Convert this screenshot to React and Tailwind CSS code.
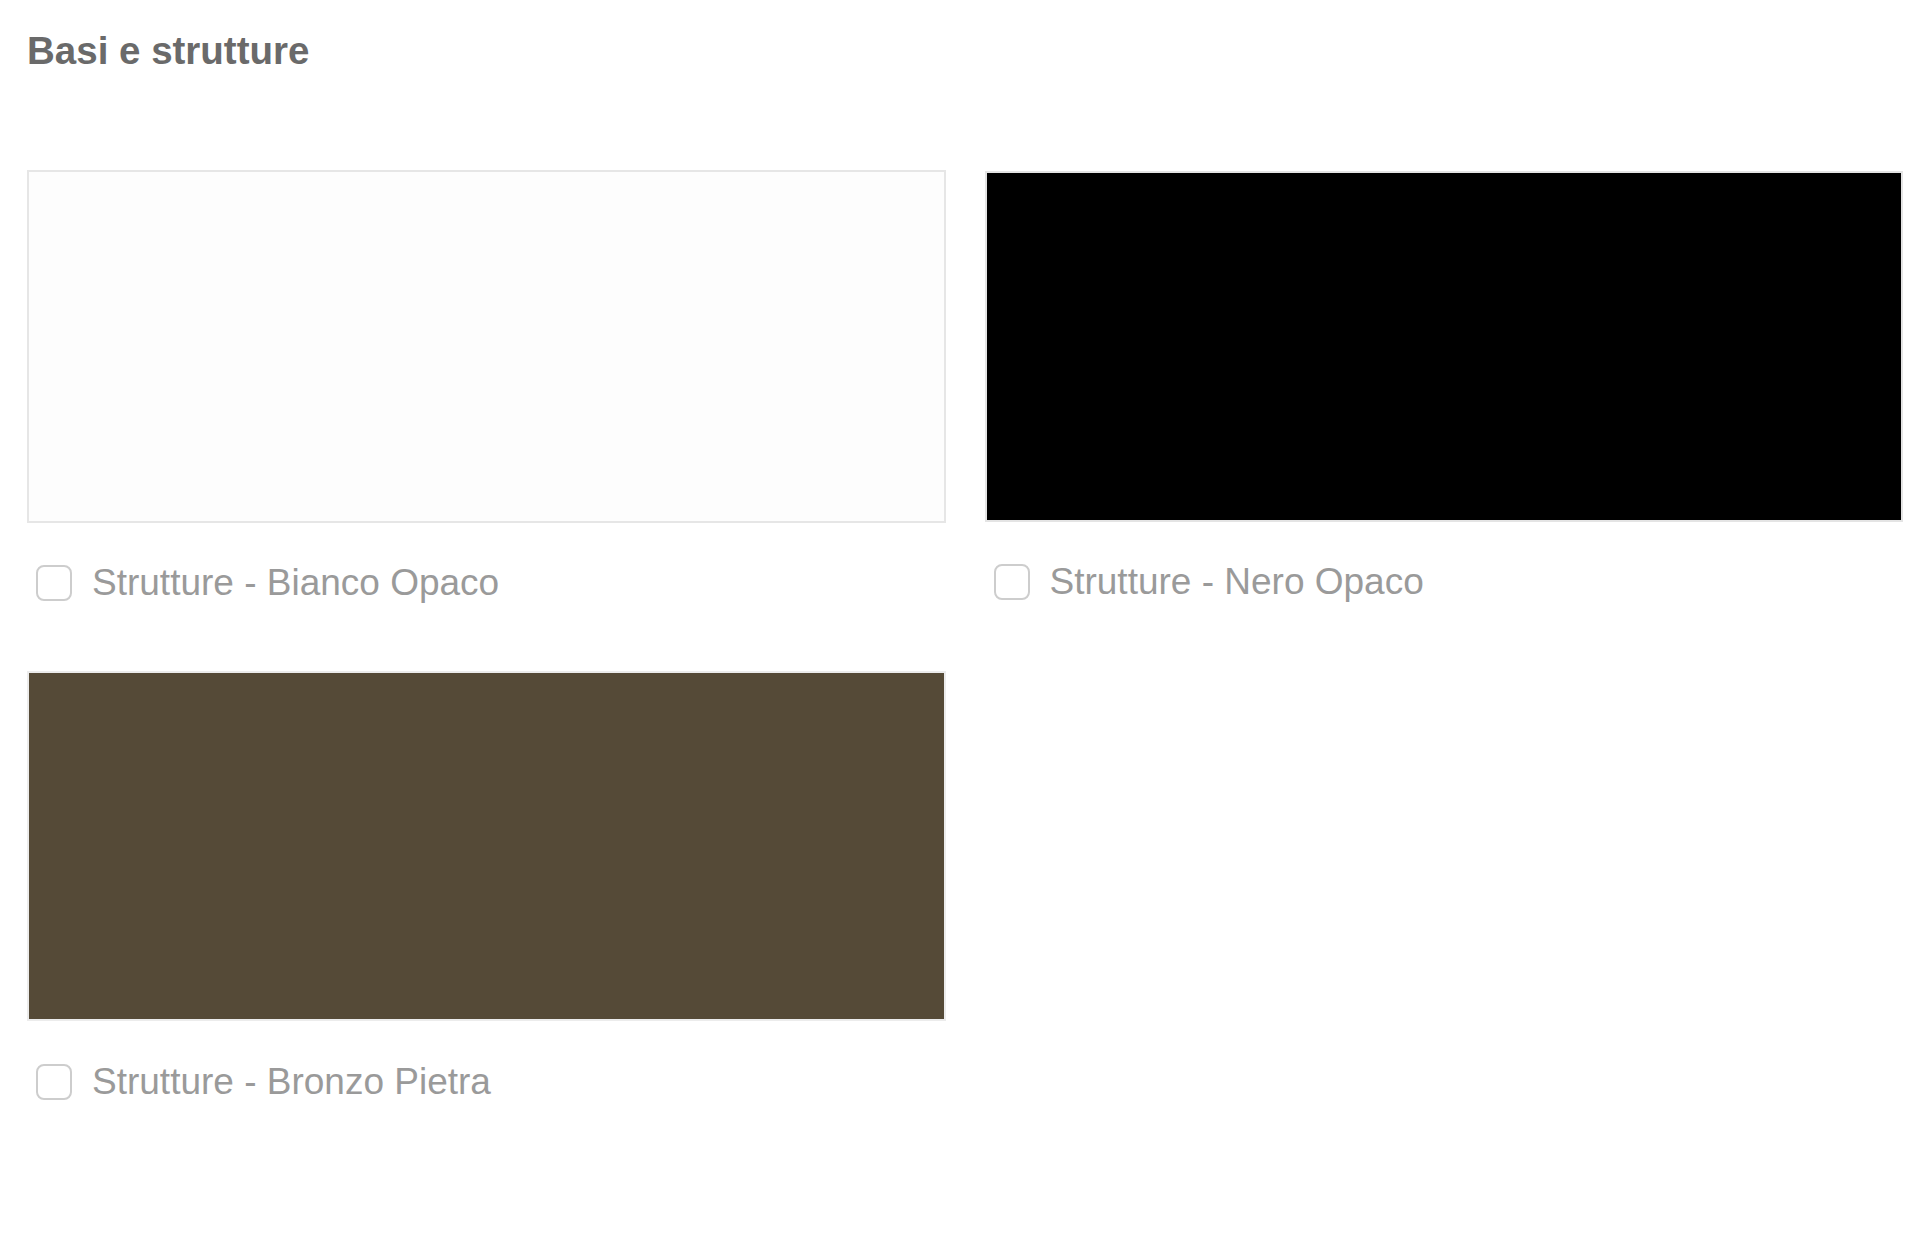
import React from "react";

const items = [
  { label: "Strutture - Bianco Opaco", swatch: "h-[353px] bg-[#fdfdfd] border-2 border-[#e6e6e6]", gap: "mt-[40px]" },
  { label: "Strutture - Nero Opaco", swatch: "h-[351px] mt-[1px] bg-black border-2 border-[#e4e4e4]", gap: "mt-[40px]" },
  { label: "Strutture - Bronzo Pietra", swatch: "h-[350px] bg-[#554a37] border-2 border-[#ececec]", gap: "mt-[41px]" },
];

function Item({ label, swatch, gap }) {
  return (
    <div className="flex flex-col">
      <div className={`w-full ${swatch}`} />
      <label className={`${gap} flex h-[40px] items-center`}>
        <span className="ml-[9px] block h-[36px] w-[36px] shrink-0 rounded-[8px] border-2 border-[#cdcdcd] bg-white" />
        <span className="ml-[20px] text-[37px] leading-none text-[#9a9a9a]" style={{ fontFamily: "'Liberation Sans', Arial, sans-serif" }}>
          {label}
        </span>
      </label>
    </div>
  );
}

export default function App() {
  return (
    <div className="min-h-[1234px] w-full bg-white pl-[27px] pr-[17px] pt-[32px]" style={{ fontFamily: "'Liberation Sans', Arial, sans-serif" }}>
      <h2 className="text-[38.5px] font-bold leading-none text-[#6a6a6a]">Basi e strutture</h2>
      <div className="mt-[99px] grid grid-cols-2 items-start gap-x-[39px] gap-y-[68px]">
        {items.map((it) => (
          <Item key={it.label} {...it} />
        ))}
      </div>
    </div>
  );
}
